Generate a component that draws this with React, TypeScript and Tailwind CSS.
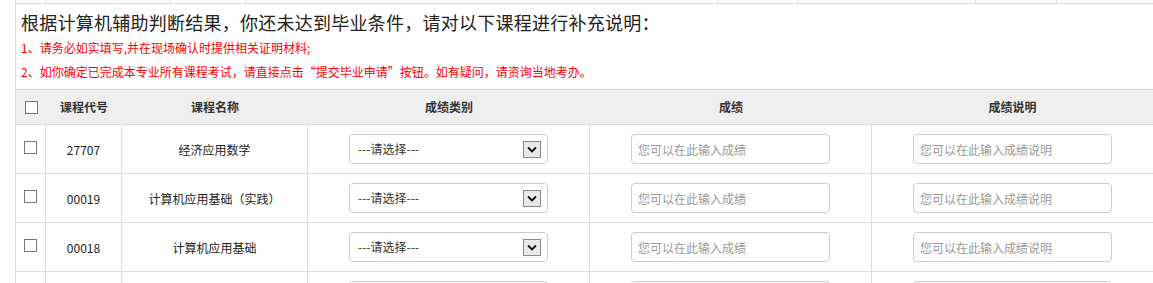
import React from "react";

const courses = [
  { code: "27707", name: "经济应用数学" },
  { code: "00019", name: "计算机应用基础（实践）" },
  { code: "00018", name: "计算机应用基础" },
];

function Checkbox() {
  return <div className="w-[13px] h-[13px] border border-[#767676] bg-white" />;
}

function SelectBox({ label }: { label: string }) {
  return (
    <div className="w-[199px] h-[30px] rounded-[4px] border border-[#ccc] bg-white flex items-center justify-between pl-[8px] pr-[6px]">
      <span className="text-[12px] text-[#333]">{label}</span>
      <div className="w-[18px] h-[17px] border border-[#8a8a8a] bg-[#e8e8e8] flex items-center justify-center">
        <svg width="10" height="7" viewBox="0 0 10 7">
          <path d="M1 1.5 L5 5.5 L9 1.5" fill="none" stroke="#111" strokeWidth="1.8" />
        </svg>
      </div>
    </div>
  );
}

function TextBox({ hint }: { hint: string }) {
  return (
    <input
      placeholder={hint}
      className="w-[199px] h-[30px] rounded-[4px] border border-[#ccc] bg-white pl-[6px] text-[12px] text-[#333] placeholder:text-[#999] outline-none"
    />
  );
}

function Row({ code, name, blank }: { code: string; name: string; blank?: boolean }) {
  const cell = "flex items-center justify-center border-r border-[#ddd]";
  return (
    <div className="grid grid-cols-[30px_76px_186px_282px_282px_1fr] h-[49px] border-b border-[#ddd] text-[12px] text-[#222]">
      <div className={`${cell} pb-[3px]`}>{!blank && <Checkbox />}</div>
      <div className={`${cell} pt-[1px]`}>{code}</div>
      <div className={`${cell} pt-[1px]`}>{name}</div>
      <div className={cell}>
        <SelectBox label={blank ? "" : "---请选择---"} />
      </div>
      <div className={cell}>
        <TextBox hint={blank ? "" : "您可以在此输入成绩"} />
      </div>
      <div className="flex items-center justify-center">
        <TextBox hint={blank ? "" : "您可以在此输入成绩说明"} />
      </div>
    </div>
  );
}

export default function App() {
  return (
    <div className="w-[1153px] h-[283px] overflow-hidden bg-white text-[#333] font-['Noto_Sans_CJK_SC',sans-serif]">
      <div className="ml-[15px] h-full border-l border-[#ddd]">
        {/* bottom edge of the table above */}
        <div className="flex h-[4px] border-b border-[#ddd]">
          <div className="w-[30px] border-r border-[#ddd]" />
          <div className="w-[125px] border-r border-[#ddd]" />
          <div className="w-[75px] border-r border-[#ddd]" />
          <div className="w-[472px] border-r border-[#ddd]" />
          <div className="w-[80px] border-r border-[#ddd]" />
          <div className="w-[178px] border-r border-[#ddd]" />
          <div className="w-[81px] border-r border-[#ddd]" />
          <div className="flex-1" />
        </div>

        <div className="pl-[5px]">
          <h2 className="text-[18px] leading-[36px] font-normal tracking-[0.25px] text-[#222]">
            根据计算机辅助判断结果，你还未达到毕业条件，请对以下课程进行补充说明：
          </h2>
          <p className="text-[12px] leading-[16px] text-[#ff0000]">
            1、请务必如实填写,并在现场确认时提供相关证明材料;
          </p>
          <p className="mt-[8px] text-[12px] leading-[16px] text-[#ff0000]">
            2、如你确定已完成本专业所有课程考试，请直接点击“提交毕业申请”按钮。如有疑问，请资询当地考办。
          </p>
        </div>

        <div className="mt-[9px]">
          <div className="grid grid-cols-[30px_76px_186px_282px_282px_1fr] h-[36px] border-y border-[#ddd] bg-[#efefef] text-[12px] font-bold text-[#333]">
            <div className="flex items-center justify-center">
              <Checkbox />
            </div>
            <div className="flex items-center justify-center">课程代号</div>
            <div className="flex items-center justify-center">课程名称</div>
            <div className="flex items-center justify-center">成绩类别</div>
            <div className="flex items-center justify-center">成绩</div>
            <div className="flex items-center justify-center">成绩说明</div>
          </div>

          {courses.map((c) => (
            <Row key={c.code} code={c.code} name={c.name} />
          ))}
          <Row code="" name="" blank />
        </div>
      </div>
    </div>
  );
}
